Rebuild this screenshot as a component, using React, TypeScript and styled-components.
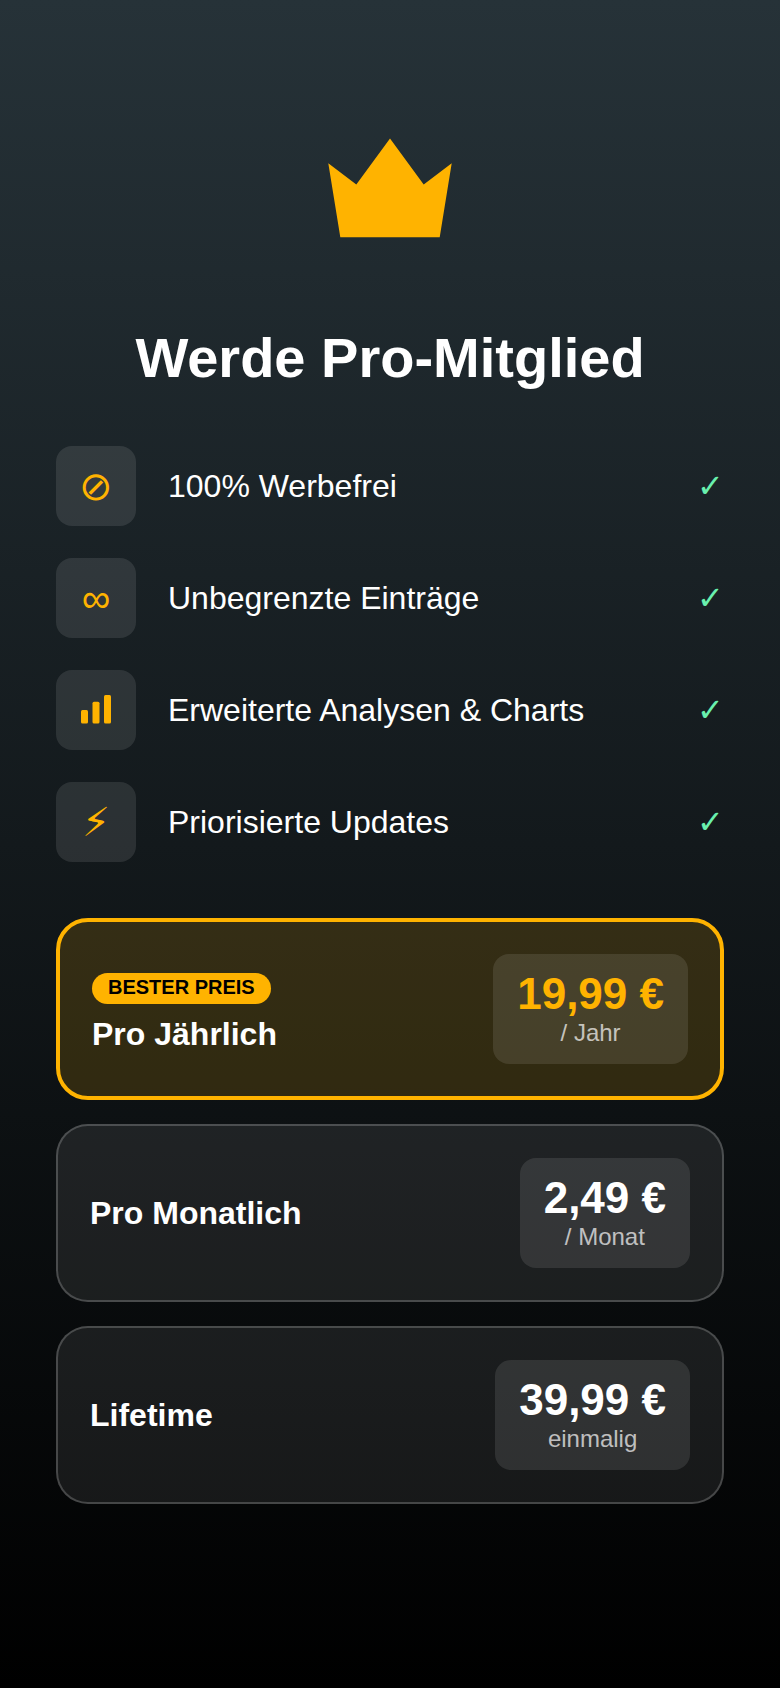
import React from 'react';
import styled, { createGlobalStyle } from 'styled-components';

const GlobalStyle = createGlobalStyle`
  * { box-sizing: border-box; }
  html { min-height: 100%; background: #000; }
  body {
    margin: 0;
    font-family: "Liberation Sans", Arial, sans-serif;
    color: #fff;
  }
`;

const Page = styled.main`
  min-height: 100vh;
  padding: 120px 56px;
  background: linear-gradient(180deg, #263238 0%, #000 100%);
`;

const Crown = styled.svg`
  display: block;
  width: 140px;
  height: 140px;
  margin: 0 auto 66px;
`;

const Title = styled.h1`
  margin: 0 0 56px;
  font-size: 56px;
  line-height: 64px;
  text-align: center;
`;

const Features = styled.ul`
  display: flex;
  flex-direction: column;
  gap: 32px;
  margin: 0 0 56px;
  padding: 0;
  list-style: none;
`;

const Feature = styled.li`
  display: flex;
  align-items: center;
  gap: 32px;
  font-size: 32px;
`;

const IconTile = styled.span`
  display: flex;
  align-items: center;
  justify-content: center;
  width: 80px;
  height: 80px;
  border-radius: 16px;
  background: rgba(255, 255, 255, 0.1);
  color: #ffb300;
  font-size: 40px;
`;

const FeatureText = styled.span`
  flex: 1;
`;

const Check = styled.span`
  color: #69f0ae;
`;

const Plans = styled.div`
  display: flex;
  flex-direction: column;
  gap: 24px;
`;

const Plan = styled.button<{ $best?: boolean }>`
  display: flex;
  align-items: center;
  justify-content: space-between;
  width: 100%;
  padding: 32px;
  border: ${p => (p.$best ? '4px solid #ffb300' : '2px solid rgba(255, 255, 255, 0.2)')};
  border-radius: 32px;
  background: ${p => (p.$best ? 'rgba(255, 179, 0, 0.15)' : 'rgba(255, 255, 255, 0.08)')};
  color: inherit;
  font-family: inherit;
  text-align: left;
  cursor: pointer;
`;

const PlanInfo = styled.span`
  display: flex;
  flex-direction: column;
  align-items: flex-start;
  gap: 12px;
`;

const Badge = styled.span`
  margin-top: 7px;
  padding: 3px 16px 5px;
  border-radius: 16px;
  background: #ffb300;
  color: #000;
  font-size: 20px;
  line-height: 23px;
  font-weight: 700;
`;

const PlanName = styled.span`
  font-size: 32px;
  line-height: 36px;
  font-weight: 700;
`;

const PriceBox = styled.span`
  padding: 15px 24px 17px;
  border-radius: 16px;
  background: rgba(255, 255, 255, 0.1);
  text-align: center;
`;

const Price = styled.span<{ $best?: boolean }>`
  display: block;
  color: ${p => (p.$best ? '#ffb300' : '#fff')};
  font-size: 44px;
  line-height: 50px;
  font-weight: 700;
`;

const Period = styled.span`
  display: block;
  color: rgba(255, 255, 255, 0.7);
  font-size: 24px;
  line-height: 28px;
`;

const BarsIcon = () => (
  <svg width="32" height="32" viewBox="0 0 32 32" fill="currentColor" aria-hidden="true">
    <rect x="1" y="16" width="7" height="13.5" rx="1.5" />
    <rect x="12.5" y="7.7" width="7" height="21.8" rx="1.5" />
    <rect x="24" y="1" width="7" height="28.5" rx="1.5" />
  </svg>
);

const features = [
  { icon: '⊘', text: '100% Werbefrei' },
  { icon: '∞', text: 'Unbegrenzte Einträge' },
  { icon: <BarsIcon />, text: 'Erweiterte Analysen & Charts' },
  { icon: '⚡\uFE0E', text: 'Priorisierte Updates' },
];

const plans = [
  { name: 'Pro Jährlich', price: '19,99 €', period: '/ Jahr', badge: 'BESTER PREIS' },
  { name: 'Pro Monatlich', price: '2,49 €', period: '/ Monat' },
  { name: 'Lifetime', price: '39,99 €', period: 'einmalig' },
];

export default function App() {
  return (
    <Page>
      <GlobalStyle />
      <Crown viewBox="0 0 140 140" aria-hidden="true">
        <path fill="#ffb300" d="M8.3 43.2L36.3 64.6L70 18.4L103.7 64.6L131.7 43.2L119.7 117.2H20.3Z" />
      </Crown>
      <Title>Werde Pro-Mitglied</Title>
      <Features>
        {features.map(f => (
          <Feature key={f.text}>
            <IconTile>{f.icon}</IconTile>
            <FeatureText>{f.text}</FeatureText>
            <Check>✓</Check>
          </Feature>
        ))}
      </Features>
      <Plans>
        {plans.map(p => (
          <Plan key={p.name} type="button" $best={!!p.badge}>
            <PlanInfo>
              {p.badge && <Badge>{p.badge}</Badge>}
              <PlanName>{p.name}</PlanName>
            </PlanInfo>
            <PriceBox>
              <Price $best={!!p.badge}>{p.price}</Price>
              <Period>{p.period}</Period>
            </PriceBox>
          </Plan>
        ))}
      </Plans>
    </Page>
  );
}
